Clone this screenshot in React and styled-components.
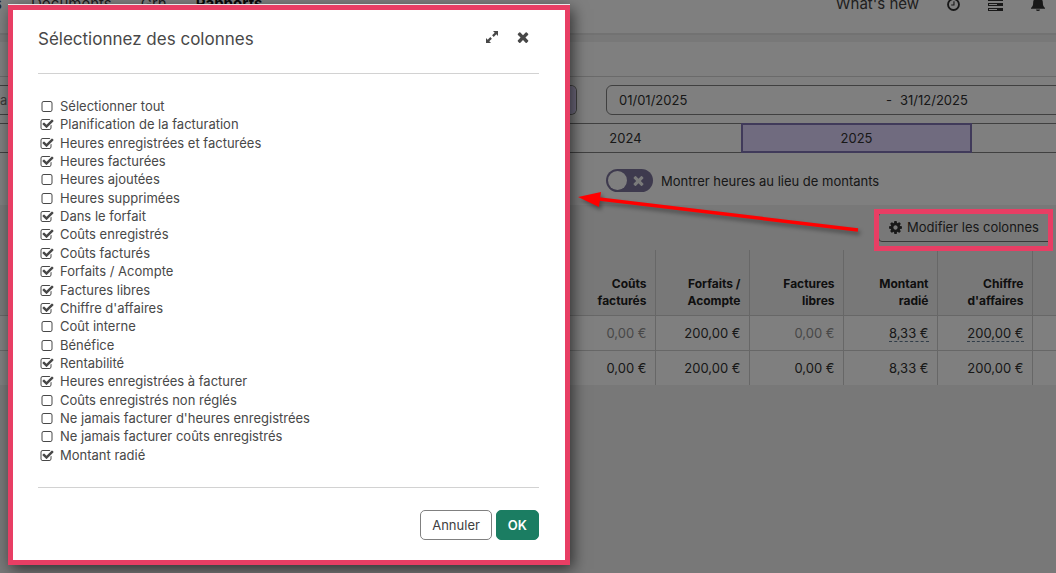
import React, { useState } from "react";
import styled, { createGlobalStyle, css } from "styled-components";

const GlobalStyle = createGlobalStyle`
  *, *::before, *::after { box-sizing: border-box; }
  body {
    margin: 0;
    background: #f0f0f0;
    color: #303030;
    font-family: Inter, "Liberation Sans", sans-serif;
    font-size: 13px;
    line-height: 18px;
    overflow: hidden;
  }
  button, input { font: inherit; color: inherit; }
`;

/* ---------- icons ---------- */

const Glyph = styled.svg`
  display: block;
  width: ${(p) => p.$size || 14}px;
  height: ${(p) => p.$size || 14}px;
  fill: currentColor;
`;

const PATHS = {
  square:
    "M1312 256h-832q-66 0-113 47t-47 113v832q0 66 47 113t113 47h832q66 0 113-47t47-113v-832q0-66-47-113t-113-47zm288 160v832q0 119-84.5 203.5t-203.5 84.5h-832q-119 0-203.5-84.5t-84.5-203.5v-832q0-119 84.5-203.5t203.5-84.5h832q119 0 203.5 84.5t84.5 203.5z",
  checked:
    "M1472 930v318q0 119-84.5 203.5t-203.5 84.5h-832q-119 0-203.5-84.5t-84.5-203.5v-832q0-119 84.5-203.5t203.5-84.5h832q63 0 117 25 15 7 18 23 3 17-9 29l-49 49q-10 10-23 10-3 0-9-2-23-6-45-6h-832q-66 0-113 47t-47 113v832q0 66 47 113t113 47h832q66 0 113-47t47-113v-254q0-13 9-22l64-64q10-10 23-10 6 0 12 3 20 8 20 29zm231-489l-814 814q-24 24-57 24t-57-24l-430-430q-24-24-24-57t24-57l110-110q24-24 57-24t57 24l263 263 647-647q24-24 57-24t57 24l110 110q24 24 24 57t-24 57z",
  times:
    "M1490 1322q0 40-28 68l-136 136q-28 28-68 28t-68-28l-294-294-294 294q-28 28-68 28t-68-28l-136-136q-28-28-28-68t28-68l294-294-294-294q-28-28-28-68t28-68l136-136q28-28 68-28t68 28l294 294 294-294q28-28 68-28t68 28l136 136q28 28 28 68t-28 68l-294 294 294 294q28 28 28 68z",
  cog:
    "M1152 896q0-106-75-181t-181-75-181 75-75 181 75 181 181 75 181-75 75-181zm512-109v222q0 12-8 23t-20 13l-185 28q-19 54-39 91 35 50 107 138 10 12 10 25t-9 23q-27 37-99 108t-94 71q-12 0-26-9l-138-108q-44 23-91 38-16 136-29 186-7 28-36 28h-222q-14 0-24.5-8.5t-11.5-21.5l-28-184q-49-16-90-37l-141 107q-10 9-25 9-14 0-25-11-126-114-165-168-7-10-7-23 0-12 8-23 15-21 51-66.5t54-70.5q-27-50-41-99l-183-27q-13-2-21-12.5t-8-23.5v-222q0-12 8-23t19-13l186-28q14-46 39-92-40-57-107-138-10-12-10-24 0-10 9-23 26-36 98.500-107.500t94.500-71.500q13 0 26 10l138 107q44-23 91-38 16-136 29-186 7-28 36-28h222q14 0 24.500 8.500t11.500 21.500l28 184q49 16 90 37l142-107q9-9 24-9 13 0 25 10 129 119 165 170 7 8 7 22 0 12-8 23-15 21-51 66.500t-54 70.500q26 50 41 98l183 28q13 2 21 12.500t8 23.500z",
};

const Icon = ({ name, size }) => (
  <Glyph $size={size} viewBox="0 0 1792 1792" aria-hidden="true">
    <path d={PATHS[name]} />
  </Glyph>
);

const ExpandIcon = () => (
  <Glyph $size={12} viewBox="0 0 12 12" aria-hidden="true">
    <path d="M7 0h5v5l-1.700-1.700-2.600 2.600-1.600-1.600 2.600-2.600zM5 12H0V7l1.700 1.700 2.600-2.600 1.600 1.600-2.600 2.600z" />
  </Glyph>
);

const ClockIcon = () => (
  <Glyph $size={13} viewBox="0 0 14 14" aria-hidden="true">
    <circle cx="7" cy="7" r="5.900" fill="none" stroke="currentColor" strokeWidth="2" />
    <path d="M7.500 3.500V7.500H4.500" fill="none" stroke="currentColor" strokeWidth="1.200" />
  </Glyph>
);

const ServerIcon = () => (
  <Glyph $size={15} viewBox="0 0 15 15" aria-hidden="true">
    {[1, 6, 11].map((y) => (
      <g key={y}>
        <rect x="0.500" y={y + 0.5} width="14" height="2" fill="none" stroke="currentColor" />
        <rect x="9" y={y} width="5" height="3" />
      </g>
    ))}
  </Glyph>
);

const BellIcon = () => (
  <Glyph $size={14} viewBox="1 0 14 16" preserveAspectRatio="none" aria-hidden="true">
    <path d="M8 0c.7 0 1 .5 1 1.200 2.400.5 3.800 2.300 3.800 4.800 0 3.800.9 5.300 2.200 6.500v1H1v-1C2.300 11.300 3.200 9.800 3.200 6c0-2.500 1.400-4.300 3.800-4.800C7 .5 7.300 0 8 0zM6 14.200h4a2 1.800 0 0 1-4 0z" />
  </Glyph>
);

/* ---------- page ---------- */

const Viewport = styled.div`
  position: relative;
  min-height: 100vh;
  overflow: hidden;
`;

/* the report is wider than the window and runs off its right side */
const Page = styled.div`
  width: calc(100% + 148px);
`;

const TopBar = styled.header`
  display: flex;
  align-items: center;
  justify-content: space-between;
  height: 58px;
  margin-top: -29px;
  padding: 4px 159px 0 0;
  background: #fff;
  border-bottom: 2px solid #e4e4e4;
  box-sizing: content-box;
  font-size: 15px;
`;

const Nav = styled.nav`
  display: flex;
  gap: 29px;
  margin-left: -47px;
`;

const NavLink = styled.a`
  color: ${(p) => (p.$active ? "#101010" : "#404040")};
  font-weight: ${(p) => (p.$active ? 700 : 400)};
  text-decoration: none;
`;

const TopTools = styled.div`
  display: flex;
  align-items: center;
  gap: 28px;
`;

const Filters = styled.section`
  margin-top: 7px;
  background: #fff;
`;

const FilterTitle = styled.div`
  height: 35px;
  border-bottom: 1px solid #d4d4d4;
`;

const FilterRow = styled.div`
  display: grid;
  grid-template-columns: 577px 1fr;
  gap: 29px;
  padding: 8px 0;
`;

const Field = styled.div`
  display: flex;
  align-items: center;
  height: 30px;
  border: 1px solid #808080;
  border-radius: ${(p) => (p.$open ? "0 6px 6px 0" : "6px")};
  border-left-width: ${(p) => (p.$open ? 0 : 1)}px;
  overflow: hidden;
  padding-left: ${(p) => (p.$open ? 0 : 12)}px;
`;

const TextInput = styled.input`
  width: ${(p) => p.$width || "auto"};
  flex: ${(p) => (p.$width ? "none" : 1)};
  min-width: 0;
  padding: 0;
  border: 0;
  background: none;
  outline: 0;
`;

const Addon = styled.button`
  width: 30px;
  height: 28px;
  border: 0;
  background: #e0d6ff;
`;

const Dash = styled.span`
  width: 14px;
`;

const Years = styled.div`
  display: grid;
  grid-template-columns: 48px repeat(5, 231px);
`;

const Year = styled.button`
  height: 30px;
  padding: 0;
  border: solid #808080;
  border-width: 1px 0;
  background: #fff;
  ${(p) =>
    p.$active &&
    css`
      border: 2px solid #8074b4;
      background: #e0d6ff;
    `}
`;

const SwitchLabel = styled.label`
  display: flex;
  align-items: center;
  gap: 8px;
  padding: 16px 0 13px 606px;
`;

const SwitchTrack = styled.span`
  display: grid;
  align-items: center;
  width: 47px;
  height: 23px;
  border-radius: 12px;
  background: #7c749c;
  color: #f4f4f4;
  & > * { grid-area: 1 / 1; }
  & > svg { margin-left: 25px; }
`;

const SwitchInput = styled.input`
  appearance: none;
  width: 19px;
  height: 19px;
  margin: 0 2px;
  border-radius: 50%;
  background: #fff;
`;

const Toolbar = styled.div`
  display: flex;
  gap: 4px;
  padding: 7px 0 8px 878px;
`;

const ToolButton = styled.button`
  display: flex;
  flex: none;
  align-items: center;
  gap: 4px;
  height: 30px;
  padding: 0 12px 0 9px;
  border: 1px solid #707070;
  border-radius: 4px;
  background: none;
  white-space: nowrap;
`;

const Report = styled.table`
  width: 100%;
  table-layout: fixed;
  border-collapse: collapse;
  th, td {
    padding: 0 8px;
    border-right: 1px solid #cecece;
    text-align: right;
  }
  th {
    height: 65px;
    padding-bottom: 6px;
    color: #202020;
    font-size: 12px;
    font-weight: 700;
    line-height: 17px;
    vertical-align: bottom;
  }
  td {
    height: 35px;
    background: #fff;
    border-top: 1px solid #cecece;
  }
`;

const Col = styled.col`
  width: ${(p) => p.$width}px;
`;

const Amount = styled.span`
  color: ${(p) => (p.$muted ? "#909090" : "inherit")};
  border-bottom: ${(p) => (p.$detail ? "1px dashed #607890" : "0")};
`;

/* ---------- dialog ---------- */

const Backdrop = styled.div`
  position: absolute;
  inset: 0;
  padding: 5px 8px;
  background: rgba(0, 0, 0, 0.5);
`;

const Dialog = styled.section`
  display: flex;
  flex-direction: column;
  width: 100%;
  max-width: 562px;
  padding: 0 26px 20px 25px;
  border: 5px solid #e83e64;
  background: #fff;
  color: #484848;
  box-shadow: 0 -1px 0 #e8e8e8, 3px 4px 14px rgba(0, 0, 0, 0.6);
`;

const DialogHeader = styled.header`
  display: flex;
  align-items: center;
  height: 64px;
  padding: 0 8px 6px 0;
  border-bottom: 1px solid #d2d2d2;
`;

const DialogTitle = styled.h1`
  flex: 1;
  margin: 0;
  font-size: 17px;
  font-weight: 400;
  line-height: 24px;
`;

const IconButton = styled.button`
  display: grid;
  place-items: center;
  width: 16px;
  height: 24px;
  margin: 0 0 4px 15px;
  padding: 0;
  border: 0;
  background: none;
`;

const Options = styled.ul`
  display: grid;
  grid-auto-rows: 1fr;
  height: 367px;
  margin: 23px 0;
  padding: 0;
  list-style: none;
`;

const Option = styled.label`
  display: flex;
  align-items: center;
  gap: 6px;
  padding-left: 2px;
`;

const Tick = styled.span`
  display: grid;
  width: 14px;
  height: 14px;
  padding-top: 1px;
  & > * { grid-area: 1 / 1; }
  & > svg { pointer-events: none; }
`;

const TickInput = styled.input`
  appearance: none;
  width: 14px;
  height: 14px;
  margin: 0;
`;

const DialogFooter = styled.footer`
  display: flex;
  justify-content: flex-end;
  gap: 4px;
  padding-top: 22px;
  border-top: 1px solid #d2d2d2;
`;

const DialogButton = styled.button`
  height: 30px;
  padding: 0 11px;
  border: 1px solid ${(p) => (p.$primary ? "#1b7d62" : "#808080")};
  border-radius: 5px;
  background: ${(p) => (p.$primary ? "#1b7d62" : "#fff")};
  color: ${(p) => (p.$primary ? "#fff" : "#404040")};
  font-weight: ${(p) => (p.$primary ? 600 : 400)};
`;

/* ---------- annotations ---------- */

const Highlight = styled.div`
  position: absolute;
  top: 209px;
  left: 874px;
  width: 179px;
  height: 42px;
  border: 5px solid #e83e64;
  pointer-events: none;
`;

const Arrow = styled.svg`
  position: absolute;
  top: 188px;
  left: 574px;
  width: 290px;
  height: 52px;
  filter: drop-shadow(2px 3px 2px rgba(0, 0, 0, 0.4));
  pointer-events: none;
`;

const COLUMNS = [
  ["Sélectionner tout", false],
  ["Planification de la facturation", true],
  ["Heures enregistrées et facturées", true],
  ["Heures facturées", true],
  ["Heures ajoutées", false],
  ["Heures supprimées", false],
  ["Dans le forfait", true],
  ["Coûts enregistrés", true],
  ["Coûts facturés", true],
  ["Forfaits / Acompte", true],
  ["Factures libres", true],
  ["Chiffre d'affaires", true],
  ["Coût interne", false],
  ["Bénéfice", false],
  ["Rentabilité", true],
  ["Heures enregistrées à facturer", true],
  ["Coûts enregistrés non réglés", false],
  ["Ne jamais facturer d'heures enregistrées", false],
  ["Ne jamais facturer coûts enregistrés", false],
  ["Montant radié", true],
];

const HEADINGS = [
  ["Coûts", "facturés"],
  ["Forfaits /", "Acompte"],
  ["Factures", "libres"],
  ["Montant", "radié"],
  ["Chiffre", "d'affaires"],
];

const AMOUNTS = [
  { text: "0,00 €", muted: true },
  { text: "200,00 €" },
  { text: "0,00 €", muted: true },
  { text: "8,33 €", detail: true },
  { text: "200,00 €", detail: true },
];

function ReportTable() {
  return (
    <Report>
      <colgroup>
        <Col $width={561} />
        <Col $width={94} />
        <Col $width={94} />
        <Col $width={94} />
        <Col $width={94} />
        <Col $width={95} />
        <Col $width={98} />
        <col />
      </colgroup>
      <thead>
        <tr>
          <th />
          {HEADINGS.map(([a, b]) => (
            <th key={a} scope="col">
              {a}
              <br />
              {b}
            </th>
          ))}
          <th scope="col">Rentabilité</th>
          <th />
        </tr>
      </thead>
      <tbody>
        <tr>
          <td />
          {AMOUNTS.map((a, i) => (
            <td key={i}>
              <Amount $muted={a.muted} $detail={a.detail}>{a.text}</Amount>
            </td>
          ))}
          <td />
          <td />
        </tr>
        <tr>
          <td />
          {AMOUNTS.map((a, i) => (
            <td key={i}>{a.text}</td>
          ))}
          <td />
          <td />
        </tr>
      </tbody>
    </Report>
  );
}

function ColumnDialog() {
  const [checked, setChecked] = useState(COLUMNS.map(([, on]) => on));
  const toggle = (index) => setChecked((all) => all.map((on, i) => (i === index ? !on : on)));
  return (
    <Dialog role="dialog" aria-labelledby="dialog-title">
      <DialogHeader>
        <DialogTitle id="dialog-title">Sélectionnez des colonnes</DialogTitle>
        <IconButton aria-label="Agrandir">
          <ExpandIcon />
        </IconButton>
        <IconButton aria-label="Fermer">
          <Icon name="times" size={16} />
        </IconButton>
      </DialogHeader>
      <Options>
        {COLUMNS.map(([label], i) => (
          <li key={label}>
            <Option>
              <Tick>
                <TickInput type="checkbox" checked={checked[i]} onChange={() => toggle(i)} />
                <Icon name={checked[i] ? "checked" : "square"} size={14} />
              </Tick>
              {label}
            </Option>
          </li>
        ))}
      </Options>
      <DialogFooter>
        <DialogButton>Annuler</DialogButton>
        <DialogButton $primary>OK</DialogButton>
      </DialogFooter>
    </Dialog>
  );
}

export default function App() {
  return (
    <Viewport>
      <GlobalStyle />
      <Page>
        <TopBar>
          <Nav>
            <NavLink href="#projets">Projets</NavLink>
            <NavLink href="#documents">Documents</NavLink>
            <NavLink href="#grh">Grh</NavLink>
            <NavLink href="#rapports" $active>Rapports</NavLink>
          </Nav>
          <TopTools>
            <NavLink href="#new">What's new</NavLink>
            <ClockIcon />
            <ServerIcon />
            <BellIcon />
          </TopTools>
        </TopBar>
        <Filters>
          <FilterTitle />
          <FilterRow>
            <Field $open>
              <TextInput aria-label="Recherche" placeholder="a" />
              <Addon aria-label="Choisir" />
            </Field>
            <Field>
              <TextInput aria-label="Date de début" defaultValue="01/01/2025" $width="267px" />
              <Dash>-</Dash>
              <TextInput aria-label="Date de fin" defaultValue="31/12/2025" />
            </Field>
          </FilterRow>
          <Years>
            <Year aria-label="2021" />
            <Year aria-label="2022" />
            <Year aria-label="2023" />
            <Year>2024</Year>
            <Year $active>2025</Year>
            <Year aria-label="2026" />
          </Years>
          <SwitchLabel>
            <SwitchTrack>
              <SwitchInput type="checkbox" role="switch" />
              <Icon name="times" size={15} />
            </SwitchTrack>
            Montrer heures au lieu de montants
          </SwitchLabel>
        </Filters>
        <Toolbar>
          <ToolButton>
            <Icon name="cog" size={15} />
            Modifier les colonnes
          </ToolButton>
          <ToolButton aria-label="Exporter" />
        </Toolbar>
        <ReportTable />
      </Page>
      <Backdrop>
        <ColumnDialog />
      </Backdrop>
      <Arrow viewBox="0 0 290 52" aria-hidden="true">
        <path d="M25 11L284 42" stroke="#f00" strokeWidth="3.500" />
        <path d="M4 9L27 4L25 19z" fill="#f00" />
      </Arrow>
      <Highlight />
    </Viewport>
  );
}
